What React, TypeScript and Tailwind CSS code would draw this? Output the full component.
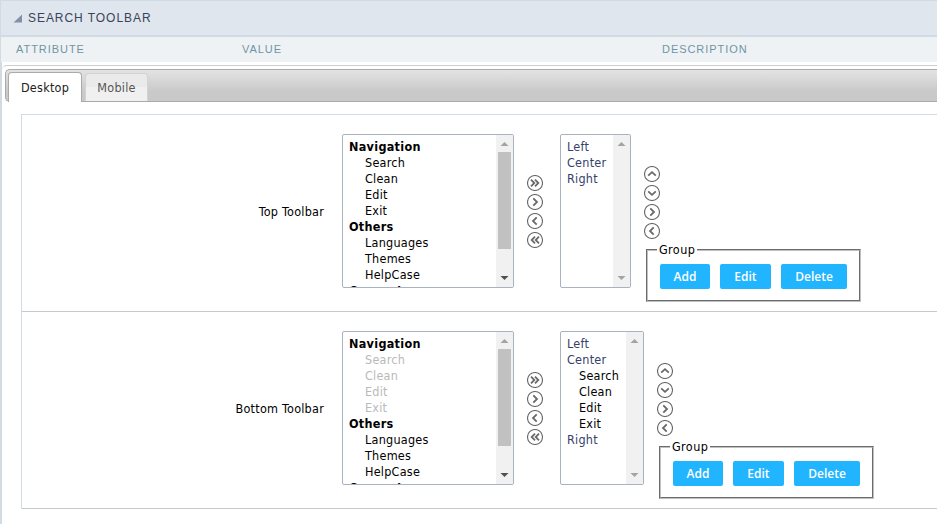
import React from "react";

const NAV = ["Search", "Clean", "Edit", "Exit"];
const OTHERS = ["Languages", "Themes", "HelpCase"];

const PATHS: Record<string, string[]> = {
  last: ["M4 4.7 L7.3 8 L4 11.3", "M8 4.7 L11.3 8 L8 11.3"],
  right: ["M6.3 4.3 L10 8 L6.3 11.7"],
  left: ["M9.7 4.3 L6 8 L9.7 11.7"],
  first: ["M8 4.7 L4.7 8 L8 11.3", "M12 4.7 L8.7 8 L12 11.3"],
  up: ["M4.2 9.7 L8 6.2 L11.8 9.7"],
  down: ["M4.2 6.3 L8 9.8 L11.8 6.3"],
};

function CircleButton({ kind }: { kind: string }) {
  return (
    <button className="block h-4 w-4">
      <svg viewBox="0 0 16 16" className="block h-4 w-4" fill="none" stroke="#696969">
        <circle cx="8" cy="8" r="7.5" strokeWidth="1.1" />
        {PATHS[kind].map((d) => (
          <path key={d} d={d} strokeWidth="1.8" />
        ))}
      </svg>
    </button>
  );
}

function ScrollBar({ active }: { active: boolean }) {
  return (
    <div className="flex w-[17px] shrink-0 flex-col items-center bg-[#f1f1f1]">
      <svg className="block h-[17px] w-[17px] shrink-0" viewBox="0 0 17 17">
        <path d="M4.5 11 L8.5 7 L12.5 11Z" fill="#a3a3a3" />
      </svg>
      {active && <div className="h-[97px] w-[13px] bg-[#c1c1c1]" />}
      <svg className="mt-auto block h-[17px] w-[17px] shrink-0" viewBox="0 0 17 17">
        <path d="M4.5 6 L12.5 6 L8.5 10Z" fill={active ? "#505050" : "#a3a3a3"} />
      </svg>
    </div>
  );
}

function ListBox({ width, active, children }: { width: string; active: boolean; children: React.ReactNode }) {
  return (
    <div className={`flex h-[154px] shrink-0 overflow-hidden rounded-[2px] border border-[#a9b2c0] bg-white ${width}`}>
      <div className="min-w-0 flex-1 overflow-hidden whitespace-nowrap pl-1.5 pt-1 leading-4">{children}</div>
      <ScrollBar active={active} />
    </div>
  );
}

function BlueButton({ label, width }: { label: string; width: string }) {
  return (
    <button
      className={`h-[25px] rounded-[2px] bg-[#21b4ff] text-center font-['Open_Sans',sans-serif] text-[12px] font-semibold tracking-normal text-white [font-stretch:normal] ${width}`}
    >
      {label}
    </button>
  );
}

function ToolbarRow({ label, used }: { label: string; used: boolean }) {
  const bold = "font-bold tracking-[0.3px]";
  return (
    <div className="flex h-[197px] items-start border-b border-[#c8c8c8] pt-[19px]">
      <div className="w-[302px] shrink-0 pt-[70px] text-right leading-4">{label}</div>
      <div className="ml-[18px] flex">
        <ListBox width="w-[172px]" active>
          <div className={bold}>Navigation</div>
          {NAV.map((n) => (
            <div key={n} className={used ? "pl-4 text-[#b9b9b9]" : "pl-4"}>{n}</div>
          ))}
          <div className={bold}>Others</div>
          {OTHERS.map((n) => (
            <div key={n} className="pl-4">{n}</div>
          ))}
          <div className={bold}>Connect</div>
        </ListBox>
      </div>
      <div className="ml-[13px] flex flex-col gap-[3px] pt-[41px]">
        <CircleButton kind="last" />
        <CircleButton kind="right" />
        <CircleButton kind="left" />
        <CircleButton kind="first" />
      </div>
      <div className="ml-[17px]">
        <ListBox width={used ? "w-[84px]" : "w-[71px]"} active={false}>
          <div className="text-[#35416b]">Left</div>
          <div className="text-[#35416b]">Center</div>
          {used && NAV.map((n) => <div key={n} className="pl-3">{n}</div>)}
          <div className="text-[#35416b]">Right</div>
        </ListBox>
      </div>
      <div className="ml-[13px] pt-8">
        <div className="flex flex-col gap-[3px]">
          <CircleButton kind="up" />
          <CircleButton kind="down" />
          <CircleButton kind="right" />
          <CircleButton kind="left" />
        </div>
        <fieldset className="ml-[2px] mt-[3px] h-[60px] w-[215px] border-2 [border-style:groove] border-[#c0c0c0] pl-3">
          <legend className="-ml-[3px] px-[2px] leading-4 tracking-[0.4px]">Group</legend>
          <div className="mt-[6px] flex gap-[10px]">
            <BlueButton label="Add" width="w-[50px]" />
            <BlueButton label="Edit" width="w-[51px]" />
            <BlueButton label="Delete" width="w-[66px]" />
          </div>
        </fieldset>
      </div>
    </div>
  );
}

export default function App() {
  return (
    <div className="h-[524px] w-[937px] overflow-hidden bg-white font-['DejaVu_Sans_Condensed','DejaVu_Sans',sans-serif] text-[12.5px] tracking-[0.24px] text-black [font-stretch:condensed]">
      <header className="flex h-[37px] items-center border-b-2 border-l border-t border-[#d0dbe3] bg-[#dfe6ee] pl-3 font-['Liberation_Sans',sans-serif]">
        <svg className="h-[9px] w-[9px]" viewBox="0 0 9 9">
          <path d="M9 0.5 V8.5 H0.5Z" fill="#8291a8" />
        </svg>
        <h1 className="ml-[6px] text-[12px] tracking-[0.95px] text-[#3c4359]">SEARCH TOOLBAR</h1>
      </header>
      <div className="flex h-[25px] items-center border-l border-[#d0dbe3] bg-[#eef2f5] pl-[15px] font-['Liberation_Sans',sans-serif] text-[11px] tracking-[0.95px] text-[#7095a5]">
        <div className="w-[226px]">ATTRIBUTE</div>
        <div className="w-[420px]">VALUE</div>
        <div>DESCRIPTION</div>
      </div>
      <div className="h-[462px] border-l-2 border-[#d0dbe3] pt-[3px]">
        <div className="h-[459px] rounded-tl-[5px] border-t border-[#cdcdcd] pl-[3px] pt-[3px]">
          <nav className="flex h-[33px] items-end gap-[3px] rounded-l-[5px] border border-r-0 border-[#aaa] bg-linear-to-b from-[#e3e3e3] to-[#c9c9c9] to-70% pl-[2px]">
            <button className="-mb-px h-[30px] w-[74px] rounded-t-[4px] border border-b-0 border-[#aaa] bg-white pt-[2px] text-[#212121]">Desktop</button>
            <button className="h-[28px] w-[63px] rounded-t-[4px] border border-b-0 border-[#d3d3d3] bg-linear-to-b from-[#eaeaea] from-50% to-[#f0f0f0] to-50% pt-[2px] text-[#555]">Mobile</button>
          </nav>
          <main className="ml-4 mt-3 border-l border-t border-[#d0dbe3]">
            <ToolbarRow label="Top Toolbar" used={false} />
            <ToolbarRow label="Bottom Toolbar" used />
          </main>
        </div>
      </div>
    </div>
  );
}
